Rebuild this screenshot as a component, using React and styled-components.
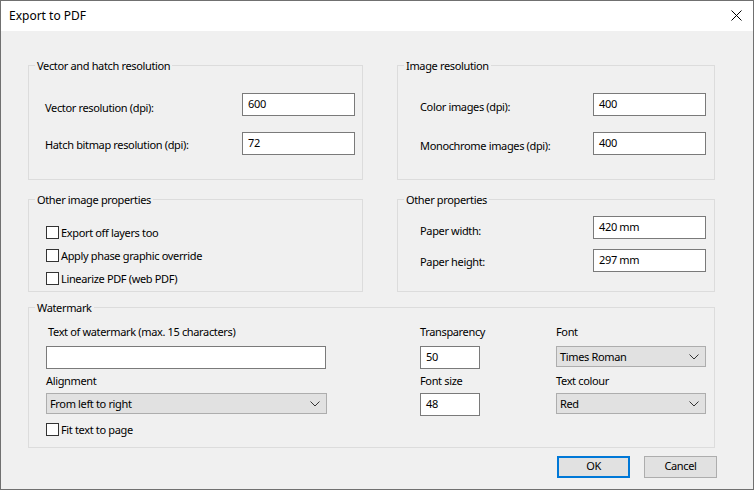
import React from 'react'
import styled, { createGlobalStyle } from 'styled-components'

const GlobalStyle = createGlobalStyle`
  html, body {
    margin: 0;
    padding: 0;
    background: #f0f0f0;
  }
  body {
    font-family: "Noto Sans", "Open Sans", sans-serif;
    font-size: 11px;
    letter-spacing: -0.35px;
    color: #000;
  }
  * {
    box-sizing: border-box;
  }
`

const Window = styled.div`
  width: 754px;
  height: 490px;
  border: 1px solid #707070;
  background: #f0f0f0;
  display: flex;
  flex-direction: column;
  overflow: hidden;
`

const TitleBar = styled.div`
  height: 30px;
  background: #fff;
  display: flex;
  align-items: center;
  justify-content: space-between;
  padding: 0 9px 1px 8px;
  flex-shrink: 0;
`

const Title = styled.span`
  font-size: 12px;
  line-height: 16px;
  letter-spacing: 0;
`

const CloseButton = styled.button`
  border: 0;
  background: transparent;
  padding: 0;
  width: 12px;
  height: 12px;
  display: flex;
  align-items: center;
  justify-content: center;
  margin-right: 2px;
`

const Body = styled.div`
  padding: 26px 38px 0 27px;
  display: flex;
  flex-direction: column;
`

const Row = styled.div`
  display: flex;
  gap: 34px;
  margin-bottom: ${p => p.$gap || 0}px;
`

const Group = styled.fieldset`
  margin: 0;
  padding: 0;
  border: 1px solid #dcdcdc;
  min-width: 0;
  width: ${p => p.$w}px;
`

const Legend = styled.legend`
  padding: 1px 2px 0;
  margin-left: 6px;
  line-height: 16px;
  height: 16px;
`

const FieldGrid = styled.div`
  display: grid;
  grid-template-columns: 1fr 113px;
  row-gap: ${p => p.$gap}px;
  align-items: center;
  padding: ${p => p.$pad};
`

const Label = styled.span`
  line-height: 16px;
  padding-top: ${p => (p.$top ?? 4)}px;
  margin-left: ${p => p.$ml || 0}px;
`

const TextBox = styled.div`
  height: 23px;
  width: ${p => (p.$w ? `${p.$w}px` : '100%')};
  background: #fff;
  border: 1px solid #7a7a7a;
  padding: 0 5px 2px;
  display: flex;
  align-items: center;
  line-height: 16px;
  white-space: nowrap;
`

const CheckList = styled.div`
  display: flex;
  flex-direction: column;
  gap: 7px;
  padding: 17px 8px 5px 17px;
`

const CheckRow = styled.label`
  display: flex;
  align-items: center;
  gap: 2px;
  height: 16px;
  line-height: 16px;
`

const CheckText = styled.span`
  padding-top: 1px;
`

const Box = styled.span`
  width: 13px;
  height: 13px;
  background: #fff;
  border: 1px solid #333;
  flex-shrink: 0;
`

const WatermarkGrid = styled.div`
  display: grid;
  grid-template-columns: 374px 136px 150px;
  grid-template-rows: 22px 27px 20px 28px 16px;
  padding: 9px 0 10px 17px;
`

const Cell = styled.div`
  display: flex;
  align-items: flex-start;
  grid-column: ${p => p.$col || 'auto'};
`

const Combo = styled.div`
  height: 21px;
  width: ${p => p.$w}px;
  background: #e1e1e1;
  border: 1px solid #adadad;
  display: flex;
  align-items: center;
  justify-content: space-between;
  padding: 0 6px 0 3px;
  line-height: 16px;
`

const Buttons = styled.div`
  display: flex;
  justify-content: flex-end;
  gap: 14px;
  margin: 8px -2px 0 0;
`

const Button = styled.button`
  width: 73px;
  height: 22px;
  background: #e1e1e1;
  border: ${p => (p.$primary ? '2px solid #0078d7' : '1px solid #adadad')};
  font-family: inherit;
  font-size: 11px;
  letter-spacing: inherit;
  line-height: 16px;
  color: #000;
  padding: 0 0 2px;
`

const Chevron = () => (
  <svg width="10" height="6" viewBox="0 0 10 6">
    <path d="M0.5 0.5 L5 5 L9.5 0.5" fill="none" stroke="#333" strokeWidth="1" />
  </svg>
)

const CloseIcon = () => (
  <svg width="11" height="11" viewBox="0 0 11 11">
    <path d="M0.5 0.5 L10.5 10.5 M10.5 0.5 L0.5 10.5" stroke="#000" strokeWidth="1" />
  </svg>
)

const Check = ({ children }) => (
  <CheckRow>
    <Box />
    <CheckText>{children}</CheckText>
  </CheckRow>
)

export default function App() {
  return (
    <>
      <GlobalStyle />
      <Window>
        <TitleBar>
          <Title>Export to PDF</Title>
          <CloseButton aria-label="Close">
            <CloseIcon />
          </CloseButton>
        </TitleBar>
        <Body>
          <Row $gap={11}>
            <Group $w={335}>
              <Legend>Vector and hatch resolution</Legend>
              <FieldGrid $gap={16} $pad="20px 7px 24px 16px">
                <Label $top={6}>Vector resolution (dpi):</Label>
                <TextBox>600</TextBox>
                <Label $top={3}>Hatch bitmap resolution (dpi):</Label>
                <TextBox>72</TextBox>
              </FieldGrid>
            </Group>
            <Group $w={318}>
              <Legend>Image resolution</Legend>
              <FieldGrid $gap={16} $pad="20px 8px 24px 22px">
                <Label $top={5}>Color images (dpi):</Label>
                <TextBox>400</TextBox>
                <Label $top={5}>Monochrome images (dpi):</Label>
                <TextBox>400</TextBox>
              </FieldGrid>
            </Group>
          </Row>
          <Row $gap={7}>
            <Group $w={335}>
              <Legend>Other image properties</Legend>
              <CheckList>
                <Check>Export off layers too</Check>
                <Check>Apply phase graphic override</Check>
                <Check>Linearize PDF (web PDF)</Check>
              </CheckList>
            </Group>
            <Group $w={318}>
              <Legend>Other properties</Legend>
              <FieldGrid $gap={10} $pad="9px 8px 19px 22px">
                <Label $top={6}>Paper width:</Label>
                <TextBox>420 mm</TextBox>
                <Label $top={2}>Paper height:</Label>
                <TextBox>297 mm</TextBox>
              </FieldGrid>
            </Group>
          </Row>
          <Group $w={687}>
            <Legend>Watermark</Legend>
            <WatermarkGrid>
              <Cell><Label $top={0} $ml={2}>Text of watermark (max. 15 characters)</Label></Cell>
              <Cell><Label $top={0}>Transparency</Label></Cell>
              <Cell><Label $top={0}>Font</Label></Cell>

              <Cell><TextBox $w={280} /></Cell>
              <Cell><TextBox $w={60}>50</TextBox></Cell>
              <Cell><Combo $w={150}>Times Roman<Chevron /></Combo></Cell>

              <Cell><Label $top={0}>Alignment</Label></Cell>
              <Cell><Label $top={0}>Font size</Label></Cell>
              <Cell><Label $top={0}>Text colour</Label></Cell>

              <Cell><Combo $w={281}>From left to right<Chevron /></Combo></Cell>
              <Cell><TextBox $w={60}>48</TextBox></Cell>
              <Cell><Combo $w={150}>Red<Chevron /></Combo></Cell>

              <Cell $col="1 / 2"><Check>Fit text to page</Check></Cell>
            </WatermarkGrid>
          </Group>
          <Buttons>
            <Button $primary>OK</Button>
            <Button>Cancel</Button>
          </Buttons>
        </Body>
      </Window>
    </>
  )
}
